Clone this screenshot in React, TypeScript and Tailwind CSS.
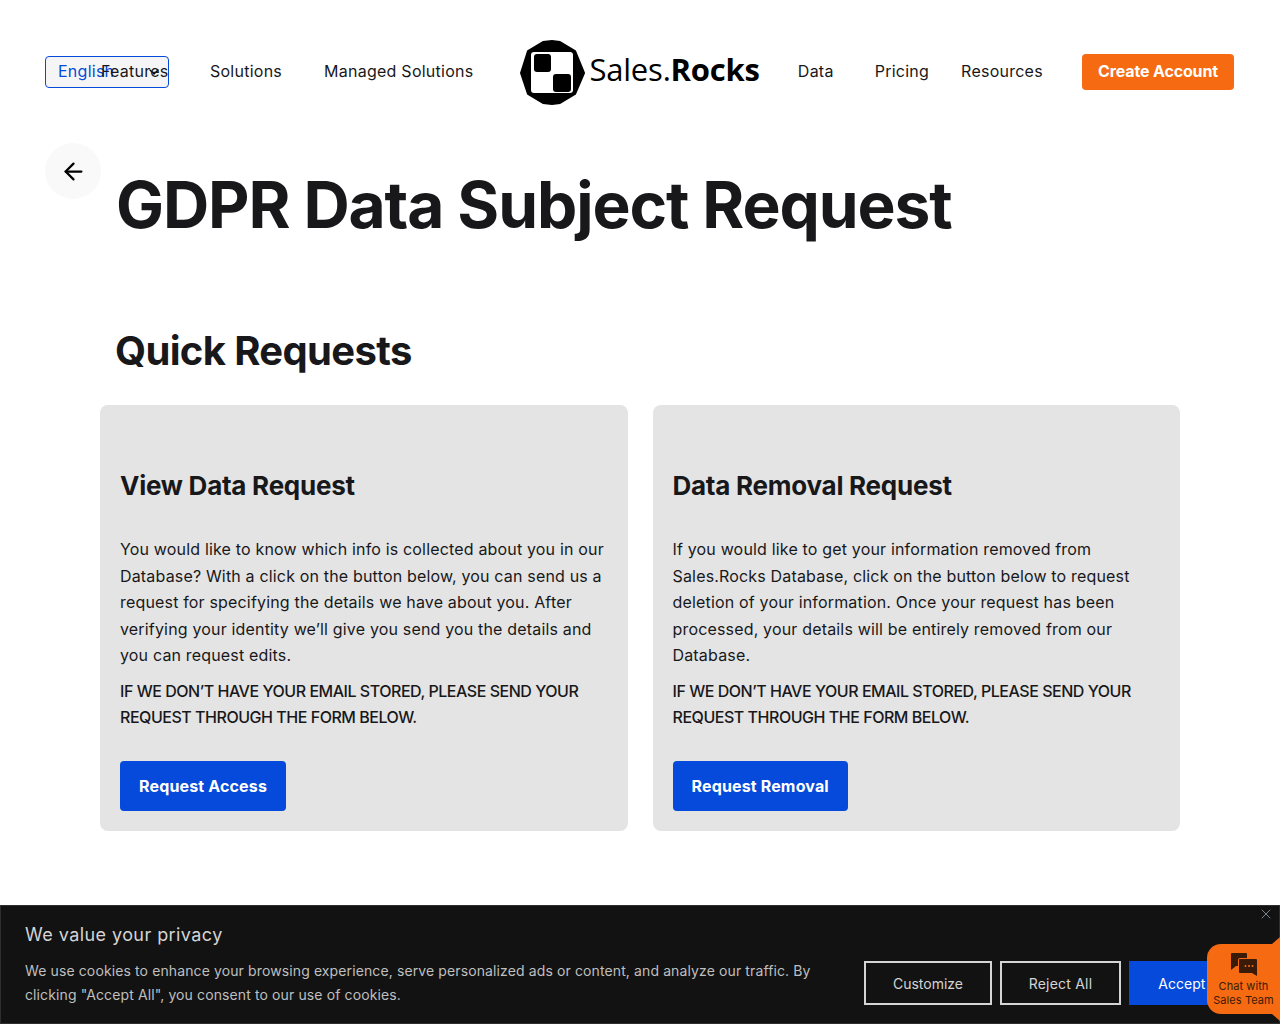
import React from 'react';
import { ArrowLeft, ChevronDown, X } from 'lucide-react';

const font = "font-['Inter','Noto_Sans',sans-serif]";

const Logo = () => (
  <div className="flex items-center">
    <svg width="65" height="65" viewBox="0 0 65 65" className="mr-[4px]">
      <polygon
        points="32,1 40,2 55,11 64,33 55,54 40,63 32,64 23,63 8,54 1,33 8,11 23,2"
        fill="#000"
        stroke="#000"
        strokeWidth="2"
        strokeLinejoin="round"
      />
      <rect x="11" y="12" width="42" height="41" rx="3" fill="#fff" />
      <rect x="14" y="14" width="17" height="18" rx="3" fill="#000" />
      <rect x="33" y="34" width="18" height="18" rx="3" fill="#000" />
    </svg>
    <span className="font-['Open_Sans',sans-serif] text-[31px] leading-none text-black tracking-[-0.2px] -mt-[5px]">
      Sales.<span className="font-bold">Rocks</span>
    </span>
  </div>
);

const ChatIcon = () => (
  <svg width="26" height="23" viewBox="0 0 26 23">
    <path d="M1 0h14a1 1 0 0 1 1 1v4H9a2 2 0 0 0-2 2v6H5l-5 4V1a1 1 0 0 1 1-1z" fill="#3a1a08" />
    <path d="M9 6h16a1 1 0 0 1 1 1v16l-5-3H9a1 1 0 0 1-1-1V7a1 1 0 0 1 1-1z" fill="#3a1a08" />
    <circle cx="14.5" cy="13" r="1" fill="#f66a11" />
    <circle cx="18" cy="13" r="1" fill="#f66a11" />
    <circle cx="21.5" cy="13" r="1" fill="#f66a11" />
  </svg>
);

interface CardProps {
  title: string;
  lines: string[];
  button: string;
}

const Card: React.FC<CardProps> = ({ title, lines, button }) => (
  <div className="bg-[#e4e4e4] rounded-lg p-5 h-[426px] pt-[61px]">
    <h3 className="text-[26px] leading-[40px] font-bold text-[#18181b] tracking-[-0.25px]">{title}</h3>
    <div className="mt-[30px] text-[16px] leading-[26.5px] text-[#18181b] tracking-[0.17px]">
      {lines.map((line) => (
        <div key={line} className="whitespace-nowrap">{line}</div>
      ))}
    </div>
    <div className="mt-[9px] text-[16px] leading-[26px] font-medium text-[#18181b] whitespace-nowrap tracking-[-0.47px]">
      <div>IF WE DON’T HAVE YOUR EMAIL STORED, PLEASE SEND YOUR</div>
      <div>REQUEST THROUGH THE FORM BELOW.</div>
    </div>
    <button className="mt-[31px] h-[50px] px-[19px] bg-[#054ada] rounded text-white font-bold text-[16px] tracking-[0.15px]">{button}</button>
  </div>
);

export default function App() {
  return (
    <div className={`${font} relative bg-white h-[1024px] overflow-hidden text-[#18181b]`}>
      {/* Header */}
      <header className="flex items-center pl-[45px] pr-[46px] pt-[40px] h-[104px] text-[16px] tracking-[0.25px]">
        <div className="relative w-[124px] h-[32px] rounded border border-[#054ada] bg-[#f5f5f5] flex items-center pl-3 pb-[2px] text-[#054ada] overflow-hidden">
          <span>English</span>
          <ChevronDown className="absolute left-[100px] top-[7px] w-4 h-4 text-black" />
        </div>
        <a className="-ml-[68px] w-[109px] relative -mt-[2px]">Features</a>
        <a className="-mt-[2px]">Solutions</a>
        <a className="ml-[42px] -mt-[2px]">Managed Solutions</a>
        <div className="ml-[47px]"><Logo /></div>
        <a className="ml-[38px] -mt-[2px]">Data</a>
        <a className="ml-[41px] -mt-[2px]">Pricing</a>
        <a className="ml-[32px] -mt-[2px]">Resources</a>
        <button className="ml-auto h-[36px] w-[152px] pb-[2px] bg-[#f66a11] rounded text-white font-bold tracking-[-0.15px]">Create Account</button>
      </header>

      {/* Title */}
      <div className="relative pl-[116px] pt-[59px]">
        <div className="absolute left-[45px] top-[39px] w-14 h-14 rounded-full bg-[#f9f9f9] flex items-center justify-center">
          <ArrowLeft className="w-[27px] h-[27px] text-black mt-px" />
        </div>
        <h1 className="text-[64px] leading-[84px] font-bold text-[#18181b] tracking-[-1.1px]">GDPR Data Subject Request</h1>
      </div>

      <h2 className="mt-[79px] pl-[115px] text-[40px] leading-[50px] font-bold text-[#18181b] tracking-[-0.65px]">Quick Requests</h2>

      {/* Cards */}
      <div className="mt-[29px] mx-[100px] grid grid-cols-2 gap-[25px]">
        <Card
          title="View Data Request"
          lines={[
            'You would like to know which info is collected about you in our',
            'Database? With a click on the button below, you can send us a',
            'request for specifying the details we have about you. After',
            'verifying your identity we’ll give you send you the details and',
            'you can request edits.',
          ]}
          button="Request Access"
        />
        <Card
          title="Data Removal Request"
          lines={[
            'If you would like to get your information removed from',
            'Sales.Rocks Database, click on the button below to request',
            'deletion of your information. Once your request has been',
            'processed, your details will be entirely removed from our',
            'Database.',
          ]}
          button="Request Removal"
        />
      </div>

      {/* Cookie banner */}
      <div className="absolute left-0 right-0 bottom-0 h-[119px] bg-[#121212] border border-[#2e2e2e] flex items-start pl-6 pt-[15px] text-[#d4d4d4]">
        <div className="w-[825px]">
          <div className="text-[18px] leading-[28px] text-[#d4d4d4] tracking-[0.43px]">We value your privacy</div>
          <p className="mt-[10px] text-[14px] leading-[24px] text-[#bfbfbf] tracking-[0.115px]">
            We use cookies to enhance your browsing experience, serve personalized ads or content, and analyze our traffic. By clicking "Accept All", you consent to our use of cookies.
          </p>
        </div>
        <div className="ml-[14px] mt-[40px] flex gap-2 text-[14px]">
          <button className="w-[128px] h-[44px] border-2 border-[#d4d4d4] text-[#d4d4d4]">Customize</button>
          <button className="w-[121px] h-[44px] border-2 border-[#d4d4d4] text-[#d4d4d4] tracking-[0.2px]">Reject All</button>
          <button className="w-[130px] h-[44px] bg-[#054ada] text-white pr-[4px]">Accept All</button>
        </div>
        <X className="absolute right-[5px] top-0 w-4 h-4 text-[#7c828a]" strokeWidth={1.5} />
      </div>

      {/* Chat widget */}
      <div className="absolute right-0 bottom-[10px] w-[73px] h-[70px] bg-[#f66a11] rounded-l-[14px] flex flex-col items-center pt-[9px] text-[11px] leading-[14px] text-[#3a1a08] tracking-[0.08px]">
        <ChatIcon />
        <div className="mt-[3px] text-center whitespace-nowrap">Chat with<br />Sales Team</div>
        <svg width="8" height="84" viewBox="0 0 8 84" className="absolute right-0 top-[-7px]">
          <polygon points="8,0 8,7 0,7" fill="#f66a11" />
          <polygon points="0,77 8,77 8,84" fill="#f66a11" />
        </svg>
      </div>
    </div>
  );
}
